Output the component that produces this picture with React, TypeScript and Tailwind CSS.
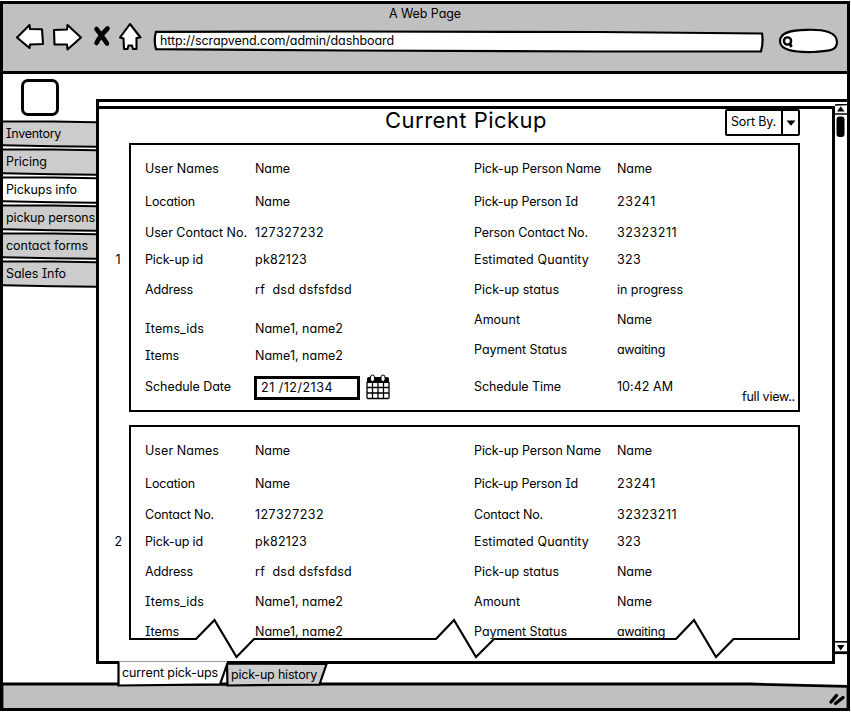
import { useLayoutEffect, useRef } from "react";
import clsx from "clsx";

/** A single line of text, tracked so that it spans the given width. */
function Text({ t, w, className }: { t: string; w: number; className?: string }) {
  const ref = useRef<HTMLSpanElement>(null);
  useLayoutEffect(() => {
    const el = ref.current;
    if (!el) return;
    el.style.letterSpacing = "0px";
    const natural = el.getBoundingClientRect().width;
    el.style.letterSpacing = `${(w - natural) / t.length}px`;
  }, [t, w]);
  return (
    <span className={clsx("inline-block whitespace-pre", className)} ref={ref}>
      {t}
    </span>
  );
}

type Cell = [string, number];
type Row = { label: Cell; value: Cell; gap: string };

const name: Cell = ["Name", 35];
const names: Cell = ["Name1, name2", 88];

const leftOne: Row[] = [
  { label: ["User Names", 74], value: name, gap: "mt-0" },
  { label: ["Location", 50], value: name, gap: "mt-[13px]" },
  { label: ["User Contact No.", 102], value: ["127327232", 69], gap: "mt-[11px]" },
  { label: ["Pick-up id", 58], value: ["pk82123", 52], gap: "mt-[7px]" },
  { label: ["Address", 48], value: ["rf  dsd dsfsfdsd", 97], gap: "mt-[10px]" },
  { label: ["Items_ids", 59], value: names, gap: "mt-[19px]" },
  { label: ["Items", 34], value: names, gap: "mt-[7px]" },
];

const rightOne: Row[] = [
  { label: ["Pick-up Person Name", 127], value: name, gap: "mt-0" },
  { label: ["Pick-up Person Id", 104], value: ["23241", 39], gap: "mt-[13px]" },
  { label: ["Person Contact No.", 114], value: ["32323211", 60], gap: "mt-[11px]" },
  { label: ["Estimated Quantity", 115], value: ["323", 24], gap: "mt-[7px]" },
  { label: ["Pick-up status", 85], value: ["in progress", 66], gap: "mt-[10px]" },
  { label: ["Amount", 46], value: name, gap: "mt-[10px]" },
  { label: ["Payment Status", 93], value: ["awaiting", 48], gap: "mt-[10px]" },
  { label: ["Schedule Time", 87], value: ["10:42 AM", 56], gap: "mt-[17px]" },
];

const leftTwo: Row[] = [
  { label: ["User Names", 74], value: name, gap: "mt-0" },
  { label: ["Location", 50], value: name, gap: "mt-[13px]" },
  { label: ["Contact No.", 69], value: ["127327232", 69], gap: "mt-[11px]" },
  { label: ["Pick-up id", 58], value: ["pk82123", 52], gap: "mt-[7px]" },
  { label: ["Address", 48], value: ["rf  dsd dsfsfdsd", 97], gap: "mt-[10px]" },
  { label: ["Items_ids", 59], value: names, gap: "mt-[10px]" },
  { label: ["Items", 34], value: names, gap: "mt-[10px]" },
];

const rightTwo: Row[] = [
  { label: ["Pick-up Person Name", 127], value: name, gap: "mt-0" },
  { label: ["Pick-up Person Id", 104], value: ["23241", 39], gap: "mt-[13px]" },
  { label: ["Contact No.", 69], value: ["32323211", 60], gap: "mt-[11px]" },
  { label: ["Estimated Quantity", 115], value: ["323", 24], gap: "mt-[7px]" },
  { label: ["Pick-up status", 85], value: name, gap: "mt-[10px]" },
  { label: ["Amount", 46], value: name, gap: "mt-[10px]" },
  { label: ["Payment Status", 93], value: ["awaiting", 48], gap: "mt-[10px]" },
];

function Rows({ rows, cols }: { rows: Row[]; cols: string }) {
  return (
    <>
      {rows.map((r, i) => (
        <div key={i} className={clsx("grid h-5", cols, r.gap)}>
          <Text t={r.label[0]} w={r.label[1]} />
          <Text t={r.value[0]} w={r.value[1]} />
        </div>
      ))}
    </>
  );
}

const LEFT = "grid-cols-[110px_auto] justify-start justify-items-start";
const RIGHT = "grid-cols-[143px_auto] justify-start justify-items-start";

const sections: { t: string; w: number; active?: boolean }[] = [
  { t: "Inventory", w: 55 },
  { t: "Pricing", w: 41 },
  { t: "Pickups info", w: 71, active: true },
  { t: "pickup persons", w: 89 },
  { t: "contact forms", w: 82 },
  { t: "Sales Info", w: 60 },
];

function BrowserBar() {
  return (
    <header className="h-[70px] shrink-0 border-b-[3px] border-black bg-[#c0c0c0]">
      <div className="flex h-[18px] justify-center">
        <Text t="A Web Page" w={72} />
      </div>
      <div className="flex pl-[13px]">
        <svg width="128" height="32" viewBox="16 22 128 32" fill="#fff" stroke="#000" strokeWidth="2.1" strokeLinejoin="round">
          <path d="M17 37.500 29.500 25 30 29 42 29.300 43 44 30 44.500 29.500 48Z" />
          <path d="M81 37.500 67.500 25 67 29.500 54 30 54.500 44.500 67 44.500 67.500 49.500Z" />
          <path d="M96.500 29Q102 36 107 43.500M107.500 28.500Q100 36 96.500 43" fill="none" strokeWidth="4.600" strokeLinecap="round" />
          <path d="M130 24 120 37.500 123.500 38.500 124 49 127.500 49 128.500 45.500 132 45.500 133 49 136.500 49 136.500 38 140.500 37.500Z" />
        </svg>
        <div className="relative mt-[8px] ml-[9px] h-[24px] w-[612px] pl-[7px] leading-[22px]">
          <svg className="absolute inset-0" width="612" height="24" viewBox="153 30 612 24" fill="#fff" stroke="#000" strokeWidth="2.200">
            <path d="M156 31.800 350 31.500 600 32 762 33.500Q763.500 42 761 51.500L600 51.500 350 50.500 156 49.200Q153.500 40 156 31.800Z" />
          </svg>
          <Text t="http://scrapvend.com/admin/dashboard" w={234} className="relative" />
        </div>
        <svg className="mt-[5px] ml-[12px]" width="64" height="28" viewBox="777 27 64 28" fill="none" stroke="#000" strokeWidth="2.200">
          <path d="M780 41C780 33 789 30 807 29.800C824 29.300 837 32 837 42C837 51 829 51 813 52C793 52.500 780 50 780 41Z" fill="#fff" />
          <circle cx="787.500" cy="41" r="3.600" strokeWidth="2.400" />
          <path d="M790 44 791.500 47" strokeWidth="2.800" />
        </svg>
      </div>
    </header>
  );
}

function Sidebar() {
  return (
    <nav className="w-[93px] shrink-0">
      <div className="mt-[5px] ml-[18px] h-[37px] w-[38px] rounded-[7px] border-[3px] border-black bg-white" />
      <div className="mt-[4px]">
        {sections.map((s) => (
          <div key={s.t} className="relative h-7 pt-[4px] pl-[3px]">
            <svg className="absolute inset-0" width="93" height="28" viewBox="0 0 93 28" stroke="#000" strokeWidth="2">
              <path d="M-2 1.400 50 1.500 96 2.200V26.700L50 26.200-2 25.200Z" fill={s.active ? "#fff" : "#ccc"} />
            </svg>
            <Text t={s.t} w={s.w} className="relative" />
          </div>
        ))}
      </div>
    </nav>
  );
}

function SortSelect() {
  return (
    <div className="flex h-[27px] w-[75px] rounded-[2px] border-2 border-black bg-white leading-[22px]">
      <div className="w-[56px] border-r-2 border-black pl-1">
        <Text t="Sort By." w={45} />
      </div>
      <svg className="mt-[9px] ml-[3px]" width="10" height="6" viewBox="0 0 10 6">
        <path d="M0.500 0.500H9.500L5 5.800Z" />
      </svg>
    </div>
  );
}

function CalendarIcon() {
  return (
    <svg width="24" height="26" viewBox="0 0 24 26">
      <path d="M1 4.500Q1 3 3 3H21Q23 3 23 4.500V24Q23 25 22 25H2Q1 25 1 24Z" fill="#fff" />
      <path d="M1 9V4.500Q1 3 3 3H21Q23 3 23 4.500V9Z" />
      <path d="M1 8V23.500Q1 24.500 2 24.500H22Q23 24.500 23 23.500V8M1 13.500H23M1 19H23M6.500 8V24M12 8V24M17.500 8V24" fill="none" stroke="#000" strokeWidth="1.300" />
      <rect x="4.500" y="1" width="4" height="6.500" rx="2" fill="#fff" stroke="#000" />
      <rect x="15" y="1" width="4" height="6.500" rx="2" fill="#fff" stroke="#000" />
    </svg>
  );
}

function Scrollbar() {
  return (
    <div className="flex w-[12px] flex-col items-center pt-[2px]">
      <svg width="12" height="552" viewBox="835 104 12 552">
        <path d="M833 105 847 104.500M835 114H847" stroke="#000" strokeWidth="1.600" />
        <path d="M840.700 106.300 844.500 111.500H837Z" />
        <rect x="836.500" y="116.500" width="8" height="20.500" rx="3" />
        <path d="M835 641.800H847" stroke="#000" strokeWidth="1.600" />
        <path d="M835 652.700H847" stroke="#000" strokeWidth="2.800" />
        <path d="M837 645H844.500L840.700 650.500Z" />
      </svg>
    </div>
  );
}

function Panel() {
  return (
    <main className="mt-[25px] h-[565px] w-[753px] border-t-[3px] border-l-[3px] border-black bg-white">
      <div className="flex h-[562px]">
        <div className="mt-[4px] h-[558px] w-[736px] border-t-[3px] border-r-[3px] border-b-[3px] border-black">
          <div className="flex h-[34px]">
            <div className="ml-[286px] w-[340px] leading-[22px]">
              <Text t="Current Pickup" w={162} className="text-[22px]" />
            </div>
            <SortSelect />
          </div>
          <div className="flex">
            <div className="flex w-[30px] justify-center pt-[107px] pl-[9px]">
              <Text t="1" w={6} />
            </div>
            <section className="relative h-[269px] w-[671px] border-[2.500px] border-black pt-[14px] pl-[14px]">
              <div className="flex">
                <div className="w-[329px]">
                  <Rows rows={leftOne} cols={LEFT} />
                  <div className="mt-[7px] flex h-[28px] items-center">
                    <div className="w-[109px]">
                      <Text t="Schedule Date" w={86} />
                    </div>
                    <div className="mt-[2px] h-[24px] w-[106px] border-[3px] border-black bg-white pl-[4px] leading-[18px]">
                      <Text t="21 /12/2134" w={72} />
                    </div>
                    <div className="ml-[6px]">
                      <CalendarIcon />
                    </div>
                  </div>
                </div>
                <div>
                  <Rows rows={rightOne} cols={RIGHT} />
                </div>
              </div>
              <div className="absolute right-[3px] bottom-[3px] h-5">
                <Text t="full view.." w={53} />
              </div>
            </section>
          </div>
          <div className="mt-[13px] flex">
            <div className="flex w-[30px] justify-center pt-[107px] pl-[9px]">
              <Text t="2" w={8} />
            </div>
            <section className="relative h-[215px] w-[671px] border-[2.500px] border-b-0 border-black pt-[14px] pl-[14px]">
              <div className="flex">
                <div className="w-[329px]">
                  <Rows rows={leftTwo} cols={LEFT} />
                </div>
                <div>
                  <Rows rows={rightTwo} cols={RIGHT} />
                </div>
              </div>
              <svg className="absolute top-[190px] -left-[2px]" width="671" height="46" viewBox="129 617 671 46">
                <path d="M130 639H196L214.500 620 236.500 657 254 639H436L454 620 476 657 494 639H676L694 620 716 657 733.500 639H800V660H130Z" fill="#fff" />
                <path d="M129 639H196L214.500 620 236.500 657 254 639H436L454 620 476 657 494 639H676L694 620 716 657 733.500 639H800" fill="none" stroke="#000" strokeWidth="2.200" />
              </svg>
            </section>
          </div>
        </div>
        <Scrollbar />
      </div>
    </main>
  );
}

function BottomTabs() {
  return (
    <div className="relative z-10 -mt-[3px] ml-[114px] flex h-[26px] w-[214px] shrink-0">
      <svg className="absolute inset-0" width="214" height="26" viewBox="117 661 214 26" stroke="#000" strokeWidth="2.200">
        <path d="M227 663.500 326.500 664 319.500 684.500 227.500 685.500Z" fill="#ccc" strokeWidth="2.200" />
        <path d="M118.500 662H227L220 684.500 118.500 685.500Z" fill="#fff" stroke="none" />
        <path d="M118.500 661.500V685.500L220 684.300 227.500 663M220 684.500H228" fill="none" />
        <path d="M119 661.500H227" stroke="#999" strokeWidth="1" />
      </svg>
      <div className="relative w-[109px] pt-[2px] pl-[5px]">
        <Text t="current pick-ups" w={96} />
      </div>
      <div className="relative pt-[4px] pl-[5px]">
        <Text t="pick-up history" w={86} />
      </div>
    </div>
  );
}

export default function App() {
  return (
    <div className="h-[712px] w-[851px] overflow-hidden bg-white pt-px pr-px pb-px font-['Inter',sans-serif] text-[12.5px] leading-5 text-black [font-feature-settings:'cv11','cv08']">
      <div className="flex h-[710px] w-[850px] flex-col border-[3px] border-black bg-white">
        <BrowserBar />
        <div className="flex h-[590px] shrink-0">
          <Sidebar />
          <Panel />
        </div>
        <BottomTabs />
        <footer className="relative -mt-[5px] h-[26px] shrink-0">
          <svg width="844" height="26" viewBox="3 682 844 26" fill="none" stroke="#000">
            <path d="M2 684H750L848 686.500V712H2Z" fill="#c0c0c0" strokeWidth="2.800" />
            <path d="M831 702 836.500 695.500M835.500 703.500 843 697.500" strokeWidth="3.400" strokeLinecap="round" />
          </svg>
        </footer>
      </div>
    </div>
  );
}
